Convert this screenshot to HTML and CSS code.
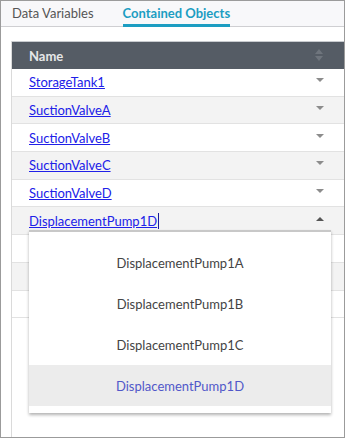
FILE: index.html
```html
<!DOCTYPE html>
<html>
<head>
<meta charset="utf-8">
<link rel="stylesheet" href="styles.css">
</head>
<body>
<div class="frame">
  <div class="tabs">
    <div class="tab">Data Variables</div>
    <div class="tab active">Contained Objects</div>
  </div>
  <div class="content">
    <div class="grid">
      <div class="head">
        <span>Name</span>
        <svg class="sort" width="8" height="13" viewBox="0 0 8 13"><path d="M4 0 L8 5 L0 5 Z M0 7 L8 7 L4 12 Z" fill="#6f757d"/></svg>
      </div>
      <div class="row"><a href="#">StorageTank1</a><span class="down"></span></div>
      <div class="row alt"><a href="#">SuctionValveA</a><span class="down"></span></div>
      <div class="row"><a href="#">SuctionValveB</a><span class="down"></span></div>
      <div class="row alt"><a href="#">SuctionValveC</a><span class="down"></span></div>
      <div class="row"><a href="#">SuctionValveD</a><span class="down"></span></div>
      <div class="row alt edit"><a href="#">DisplacementPump1D</a><span class="caret"></span><span class="up"></span></div>
      <div class="row"></div>
      <div class="row alt"></div>
      <div class="row"></div>
      <div class="popup">
        <div class="item">DisplacementPump1A</div>
        <div class="item">DisplacementPump1B</div>
        <div class="item">DisplacementPump1C</div>
        <div class="item sel">DisplacementPump1D</div>
      </div>
    </div>
  </div>
</div>
</body>
</html>
```
FILE: styles.css
```css
* { box-sizing: border-box; }
html, body { margin: 0; padding: 0; }
body { font-family: Lato, "Open Sans", sans-serif; font-size: 13px; background: #fff; }
.frame {
  width: 345px; height: 438px;
  border: 1px solid #9b9b9b;
  display: flex; flex-direction: column;
  overflow: hidden;
}
.tabs {
  height: 26px;
  background: #f8f8fa;
  border-bottom: 1px solid #cfcfd2;
  display: flex; gap: 29px;
  padding-left: 11px;
  flex: none;
}
.tab {
  color: #555;
  line-height: 25px;
  height: 26px;
  margin-bottom: -1px;
}
.tab.active {
  color: #1c9dc2;
  font-weight: bold;
  border-bottom: 3px solid #1c9dc2;
}
.content {
  flex: 1;
  padding: 14px 0 0 10px;
  display: flex;
}
.grid {
  flex: 1;
  border-left: 1px solid #dadada;
  position: relative;
}
.head {
  height: 28px;
  background: #555c65;
  border-top: 1px solid #c8cbcf;
  display: flex; align-items: center; justify-content: space-between;
  padding: 0 21px 0 17px;
  color: #e6e7e8;
  font-weight: bold;
}
.sort { display: block; }
.row {
  height: 27.7px;
  border-bottom: 1px solid #e2e2e2;
  display: flex; align-items: center;
  padding: 0 20px 0 17px;
  background: #fff;
}
.row.alt { background: #f3f3f3; }
.row a {
  color: #2020e8;
  text-decoration: underline;
}
.down, .up {
  margin-left: auto;
  width: 0; height: 0;
  border-left: 4.5px solid transparent;
  border-right: 4.5px solid transparent;
}
.down { border-top: 4px solid #8c8c8c; margin-top: -4px; }
.up { border-bottom: 4px solid #555; margin-top: -4px; }
.caret {
  width: 1px; height: 16px;
  background: #1a1a9a;
  margin-left: 1px;
}
.popup {
  position: absolute;
  left: 17px; top: 189px;
  width: 302px;
  background: #fff;
  border-top: 2px solid #c8c8c8;
  padding: 10px 0 7px;
  box-shadow: 0 2px 3px rgba(0,0,0,0.3);
}
.item {
  height: 41px;
  display: flex; align-items: center; justify-content: center;
  color: #444;
}
.item.sel {
  background: #ececec;
  color: #5158c9;
}
```
